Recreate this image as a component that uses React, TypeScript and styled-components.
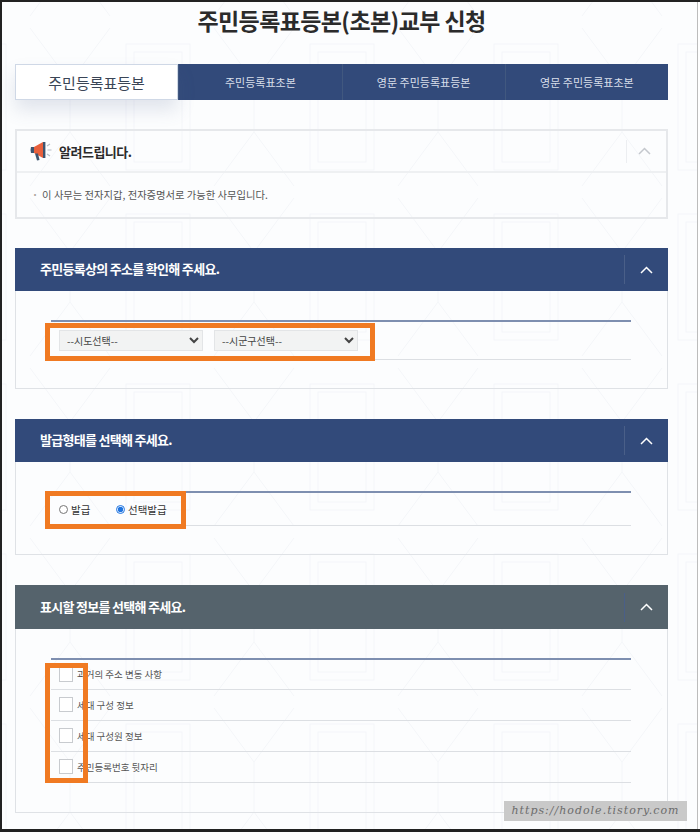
import React from 'react';
import styled, { createGlobalStyle } from 'styled-components';

const patternSvg = encodeURIComponent(`<svg xmlns="http://www.w3.org/2000/svg" width="184" height="170" viewBox="0 0 184 170"><g fill="none" stroke="#f4f6f9" stroke-width="1"><path d="M8 6 L48 60 L88 6"/><path d="M8 164 L48 110 L88 164"/><rect x="104" y="22" width="64" height="126"/><rect x="112" y="30" width="48" height="110"/><path d="M48 60 V110"/></g></svg>`);

const GlobalStyle = createGlobalStyle`
	* {
		box-sizing: border-box;
	}

	html, body {
		margin: 0;
		padding: 0;
		background: #fff;
	}

	body {
		font-family: "Noto Sans CJK KR", "Noto Sans", sans-serif;
		color: #333;
	}
`;

const Frame = styled.div`
	position: relative;
	width: 700px;
	height: 832px;
	overflow: hidden;
	padding: 0 32px 0 13px;
	border-top: 2px solid #222;
	border-left: 2px solid #222;
	border-bottom: 3px solid #222;
	background-color: #fcfdfe;
	background-image: url("data:image/svg+xml,${patternSvg}");
	background-position: 20px 20px;
	box-shadow: inset -2px 0 0 #fff, inset -3px 0 0 #bcbcbc;
`;

const Title = styled.h1`
	margin: 0;
	height: 62px;
	font-size: 23px;
	line-height: 36px;
	font-weight: 700;
	letter-spacing: -0.6px;
	text-align: center;
	color: #2b2b2b;
`;

const Tabs = styled.div`
	display: grid;
	grid-template-columns: repeat(4, 1fr);
	height: 36px;
	margin-bottom: 29px;
	background: #324a7a;
`;

const Tab = styled.div<{ $active?: boolean }>`
	display: flex;
	align-items: center;
	justify-content: center;
	font-size: ${({ $active }) => ($active ? '15px' : '11px')};
	color: ${({ $active }) => ($active ? '#3a4556' : '#d9dfea')};
	background: ${({ $active }) => ($active ? '#fff' : 'transparent')};
	border: ${({ $active }) => ($active ? '1px solid #cfd8e6' : 'none')};
	border-left: ${({ $active }) => ($active ? '1px solid #cfd8e6' : '1px solid #41587f')};
	box-shadow: ${({ $active }) => ($active ? '0 10px 18px rgba(80, 100, 140, 0.16)' : 'none')};
`;

const NoticeBox = styled.section`
	height: 90px;
	margin-bottom: 29px;
	border: 2px solid #e6e8eb;
`;

const NoticeHeader = styled.div`
	display: flex;
	align-items: center;
	height: 42px;
	padding-left: 13px;
	border-bottom: 2px solid #eef0f2;
`;

const NoticeTitle = styled.strong`
	margin-left: 6px;
	font-size: 13px;
	font-weight: 700;
	letter-spacing: -0.5px;
	color: #2b2b2b;
`;

const NoticeToggle = styled.div`
	display: flex;
	align-items: center;
	justify-content: center;
	width: 40px;
	height: 23px;
	margin-left: auto;
	padding-right: 4px;
	border-left: 1px solid #eceef1;
	color: #c4c8cd;
`;

const NoticeText = styled.p`
	margin: 14px 0 0 15px;
	font-size: 10.3px;
	line-height: 16px;
	color: #555;

	&::before {
		content: '·';
		margin-right: 4px;
		color: #a9a39c;
		font-weight: 700;
	}
`;

const Section = styled.section`
	margin-bottom: 30px;
	border: 1px solid #dfe2e6;
	border-top: none;
`;

const SectionHeader = styled.div<{ $grey?: boolean }>`
	display: flex;
	align-items: center;
	height: ${({ $grey }) => ($grey ? '44px' : '43px')};
	margin: 0 -1px;
	padding-left: 25px;
	background: ${({ $grey }) => ($grey ? '#55636c' : '#324a7a')};
`;

const SectionTitle = styled.h2`
	margin: 0 0 2px;
	font-size: 13px;
	font-weight: 700;
	letter-spacing: -0.7px;
	color: #fff;
`;

const SectionToggle = styled.div`
	display: flex;
	align-items: center;
	justify-content: center;
	width: 44px;
	height: 29px;
	margin-left: auto;
	border-left: 1px solid #4a5f88;
	color: #fff;
`;

const SectionBody = styled.div`
	padding: 29px 36px 29px 35px;
`;

const FormTable = styled.div`
	position: relative;
	border-top: 2px solid #7e8fb0;
`;

const FormRow = styled.div<{ $height: number }>`
	display: flex;
	align-items: center;
	gap: 11px;
	height: ${({ $height }) => $height}px;
	margin-bottom: -1px;
	padding-left: 8px;
	border-bottom: 1px solid #dcdfe3;
`;

const Select = styled.select`
	width: 144px;
	height: 21px;
	padding: 0 0 0 3px;
	border: 1px solid #e3e5e7;
	background-color: #f2f3f3;
	font-family: inherit;
	font-size: 10px;
	color: #444;
`;

const RadioLabel = styled.label<{ $wide?: boolean }>`
	display: flex;
	align-items: center;
	gap: 3px;
	width: ${({ $wide }) => ($wide ? 'auto' : '46px')};
	font-size: 10.5px;
	color: #333;
`;

const Radio = styled.input`
	width: 9px;
	height: 9px;
	margin: 0;
	accent-color: #1f74e0;
`;

const CheckRow = styled.label`
	display: flex;
	align-items: center;
	gap: 4px;
	height: 31px;
	padding: 0 0 1px 8px;
	border-bottom: 1px solid #dcdfe3;
	font-size: 9.5px;
	color: #555;

	&:first-child {
		height: 30px;
	}
`;

const CheckBox = styled.input`
	appearance: none;
	flex: none;
	width: 14px;
	height: 15px;
	margin: 0;
	background: #fff;
	border: 1px solid #c8cbcf;
`;

const Highlight = styled.div<{ $left: number; $top: number; $width: number; $height: number }>`
	position: absolute;
	left: ${({ $left }) => $left}px;
	top: ${({ $top }) => $top}px;
	width: ${({ $width }) => $width}px;
	height: ${({ $height }) => $height}px;
	border: 5px solid #f07a22;
	pointer-events: none;
`;

const Watermark = styled.div`
	position: absolute;
	right: 13px;
	bottom: 8px;
	width: 183px;
	height: 20px;
	background: #c9c9c9;
	font-family: "DejaVu Serif", serif;
	font-style: italic;
	font-size: 11px;
	line-height: 20px;
	letter-spacing: 1px;
	text-align: center;
	color: #6c6c6c;
`;

const Chevron = () => (
	<svg width="13" height="8" viewBox="0 0 13 8" fill="none" stroke="currentColor" strokeWidth="1.5">
		<path d="M1 7 L6.5 1.5 L12 7" />
	</svg>
);

const Megaphone = () => (
	<svg width="23" height="20" viewBox="0 0 23 20">
		<path d="M1 6 Q0 9 1 12 L4 12 L4 6 Z" fill="#3d5570" />
		<path d="M4 6 L13 1 L15 1 L15 17 L13 17 L4 12 Z" fill="#e8603c" />
		<path d="M5 12.5 L8 12.5 L9.5 19 L7 19.5 Z" fill="#3d5570" />
		<rect x="13" y="1" width="2.4" height="16" fill="#3d5570" />
		<path d="M17.5 9 H21.5 M17 5 L20 3 M17 13 L20 15" stroke="#b8bec6" strokeWidth="1.2" />
	</svg>
);

const TABS = ['주민등록표등본', '주민등록표초본', '영문 주민등록표등본', '영문 주민등록표초본'];
const CHECKS = ['과거의 주소 변동 사항', '세대 구성 정보', '세대 구성원 정보', '주민등록번호 뒷자리'];

const App = () => (
	<Frame>
		<GlobalStyle />
		<Title>주민등록표등본(초본)교부 신청</Title>

		<Tabs>
			{TABS.map((tab, index) => (
				<Tab key={tab} $active={index === 0}>{tab}</Tab>
			))}
		</Tabs>

		<NoticeBox>
			<NoticeHeader>
				<Megaphone />
				<NoticeTitle>알려드립니다.</NoticeTitle>
				<NoticeToggle><Chevron /></NoticeToggle>
			</NoticeHeader>
			<NoticeText>이 사무는 전자지갑, 전자증명서로 가능한 사무입니다.</NoticeText>
		</NoticeBox>

		<Section>
			<SectionHeader>
				<SectionTitle>주민등록상의 주소를 확인해 주세요.</SectionTitle>
				<SectionToggle><Chevron /></SectionToggle>
			</SectionHeader>
			<SectionBody>
				<FormTable>
					<FormRow $height={38}>
						<Select defaultValue="sido">
							<option value="sido">--시도선택--</option>
						</Select>
						<Select defaultValue="sigungu">
							<option value="sigungu">--시군구선택--</option>
						</Select>
					</FormRow>
					<Highlight $left={-6} $top={1} $width={330} $height={38} />
				</FormTable>
			</SectionBody>
		</Section>

		<Section>
			<SectionHeader>
				<SectionTitle>발급형태를 선택해 주세요.</SectionTitle>
				<SectionToggle><Chevron /></SectionToggle>
			</SectionHeader>
			<SectionBody>
				<FormTable>
					<FormRow $height={33}>
						<RadioLabel>
							<Radio type="radio" name="issue" />
							발급
						</RadioLabel>
						<RadioLabel $wide>
							<Radio type="radio" name="issue" defaultChecked />
							선택발급
						</RadioLabel>
					</FormRow>
					<Highlight $left={-6} $top={-2} $width={141} $height={38} />
				</FormTable>
			</SectionBody>
		</Section>

		<Section>
			<SectionHeader $grey>
				<SectionTitle>표시할 정보를 선택해 주세요.</SectionTitle>
				<SectionToggle><Chevron /></SectionToggle>
			</SectionHeader>
			<SectionBody>
				<FormTable>
					{CHECKS.map(label => (
						<CheckRow key={label}>
							<CheckBox type="checkbox" />
							{label}
						</CheckRow>
					))}
					<Highlight $left={-6} $top={3} $width={43} $height={120} />
				</FormTable>
			</SectionBody>
		</Section>

		<Watermark>https://hodole.tistory.com</Watermark>
	</Frame>
);

export default App;
